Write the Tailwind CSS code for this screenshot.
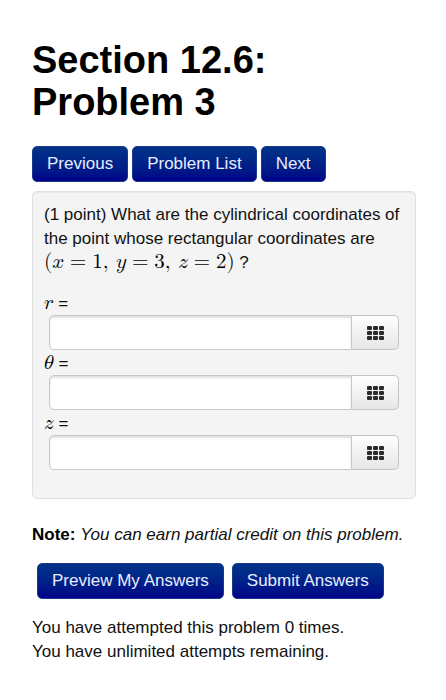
<!DOCTYPE html>
<html lang="en">
<head>
    <meta charset="UTF-8">
    <meta name="viewport" content="width=device-width, initial-scale=1.0">
    <title>Section 12.6: Problem 3</title>
    <script src="https://cdn.jsdelivr.net/npm/@tailwindcss/browser@4"></script>
</head>
<body class="bg-white text-[#111] font-['Liberation_Sans',Arial,sans-serif] text-[17px] leading-6">
    <svg class="hidden">
        <symbol id="keypad" viewBox="0 0 17 14">
            <g fill="#2b2b2b">
                <rect x="0" y="0" width="5" height="4" rx="1"/>
                <rect x="6" y="0" width="5" height="4" rx="1"/>
                <rect x="12" y="0" width="5" height="4" rx="1"/>
                <rect x="0" y="5" width="5" height="4" rx="1"/>
                <rect x="6" y="5" width="5" height="4" rx="1"/>
                <rect x="12" y="5" width="5" height="4" rx="1"/>
                <rect x="0" y="10" width="5" height="4" rx="1"/>
                <rect x="6" y="10" width="5" height="4" rx="1"/>
                <rect x="12" y="10" width="5" height="4" rx="1"/>
            </g>
        </symbol>
    </svg>

    <main class="pl-8 pr-[30px] pt-[39px] pb-8">
        <h1 class="text-[38px] leading-[42px] font-bold text-black max-w-72">Section 12.6: Problem 3</h1>

        <nav class="flex gap-1 mt-[23px]">
            <a href="#" class="h-9 px-[14px] leading-[34px] rounded-[5px] border border-[#1a3a8c] bg-linear-to-b from-[#003388] to-[#000088] text-[#e8edff]">Previous</a>
            <a href="#" class="h-9 px-[14px] leading-[34px] rounded-[5px] border border-[#1a3a8c] bg-linear-to-b from-[#003388] to-[#000088] text-[#e8edff]">Problem List</a>
            <a href="#" class="h-9 px-[14px] leading-[34px] rounded-[5px] border border-[#1a3a8c] bg-linear-to-b from-[#003388] to-[#000088] text-[#e8edff]">Next</a>
        </nav>

        <form id="problem" class="mt-[9px] px-[11px] pt-[11px] pb-7 rounded-[5px] border border-[#e0e0e0] bg-[#f4f4f4] shadow-[inset_0_1px_1px_rgba(0,0,0,0.05)]">
            <p>(1 point) What are the cylindrical coordinates of the point whose rectangular coordinates are</p>
            <p class="h-6"><math class="font-['Latin_Modern_Math','Liberation_Serif',serif] text-[21px] leading-none text-black"><mo stretchy="false">(</mo><mi>x</mi><mo>=</mo><mn>1</mn><mo>,</mo><mspace width="4px"/><mi>y</mi><mo>=</mo><mn>3</mn><mo>,</mo><mspace width="4px"/><mi>z</mi><mo>=</mo><mn>2</mn><mo stretchy="false">)</mo></math> ?</p>

            <div class="mt-[15px]">
                <label for="r" class="block h-[25px] leading-7"><math class="font-['Latin_Modern_Math','Liberation_Serif',serif] text-[21px] leading-none text-black"><mi>r</mi></math> =</label>
                <div class="flex h-[35px] mx-[5px]">
                    <input id="r" type="text" class="flex-1 min-w-0 px-2 bg-white border border-[#c8c8c8] rounded-l-[5px] shadow-[inset_0_2px_2px_rgba(0,0,0,0.12)]">
                    <button type="button" aria-label="Open equation editor for r" class="w-[47px] flex items-center justify-center border border-l-0 border-[#c4c4c4] rounded-r-[5px] bg-linear-to-b from-white to-[#e6e6e6]">
                        <svg class="w-[17px] h-[14px]"><use href="#keypad"/></svg>
                    </button>
                </div>
            </div>
            <div>
                <label for="theta" class="block h-[25px] leading-7"><math class="font-['Latin_Modern_Math','Liberation_Serif',serif] text-[21px] leading-none text-black"><mi>θ</mi></math> =</label>
                <div class="flex h-[35px] mx-[5px]">
                    <input id="theta" type="text" class="flex-1 min-w-0 px-2 bg-white border border-[#c8c8c8] rounded-l-[5px] shadow-[inset_0_2px_2px_rgba(0,0,0,0.12)]">
                    <button type="button" aria-label="Open equation editor for theta" class="w-[47px] flex items-center justify-center border border-l-0 border-[#c4c4c4] rounded-r-[5px] bg-linear-to-b from-white to-[#e6e6e6]">
                        <svg class="w-[17px] h-[14px]"><use href="#keypad"/></svg>
                    </button>
                </div>
            </div>
            <div>
                <label for="z" class="block h-[25px] leading-7"><math class="font-['Latin_Modern_Math','Liberation_Serif',serif] text-[21px] leading-none text-black"><mi>z</mi></math> =</label>
                <div class="flex h-[35px] mx-[5px]">
                    <input id="z" type="text" class="flex-1 min-w-0 px-2 bg-white border border-[#c8c8c8] rounded-l-[5px] shadow-[inset_0_2px_2px_rgba(0,0,0,0.12)]">
                    <button type="button" aria-label="Open equation editor for z" class="w-[47px] flex items-center justify-center border border-l-0 border-[#c4c4c4] rounded-r-[5px] bg-linear-to-b from-white to-[#e6e6e6]">
                        <svg class="w-[17px] h-[14px]"><use href="#keypad"/></svg>
                    </button>
                </div>
            </div>
        </form>

        <p class="mt-6"><b class="text-black">Note:</b> <i>You can earn partial credit on this problem.</i></p>

        <div class="flex gap-2 mt-4 ml-[5px]">
            <button type="submit" form="problem" class="h-9 px-[14px] rounded-[5px] border border-[#1a3a8c] bg-linear-to-b from-[#003388] to-[#000088] text-[#e8edff]">Preview My Answers</button>
            <button type="submit" form="problem" class="h-9 px-[14px] rounded-[5px] border border-[#1a3a8c] bg-linear-to-b from-[#003388] to-[#000088] text-[#e8edff]">Submit Answers</button>
        </div>

        <p class="mt-[17px]">You have attempted this problem 0 times.<br>You have unlimited attempts remaining.</p>
    </main>
</body>
</html>
